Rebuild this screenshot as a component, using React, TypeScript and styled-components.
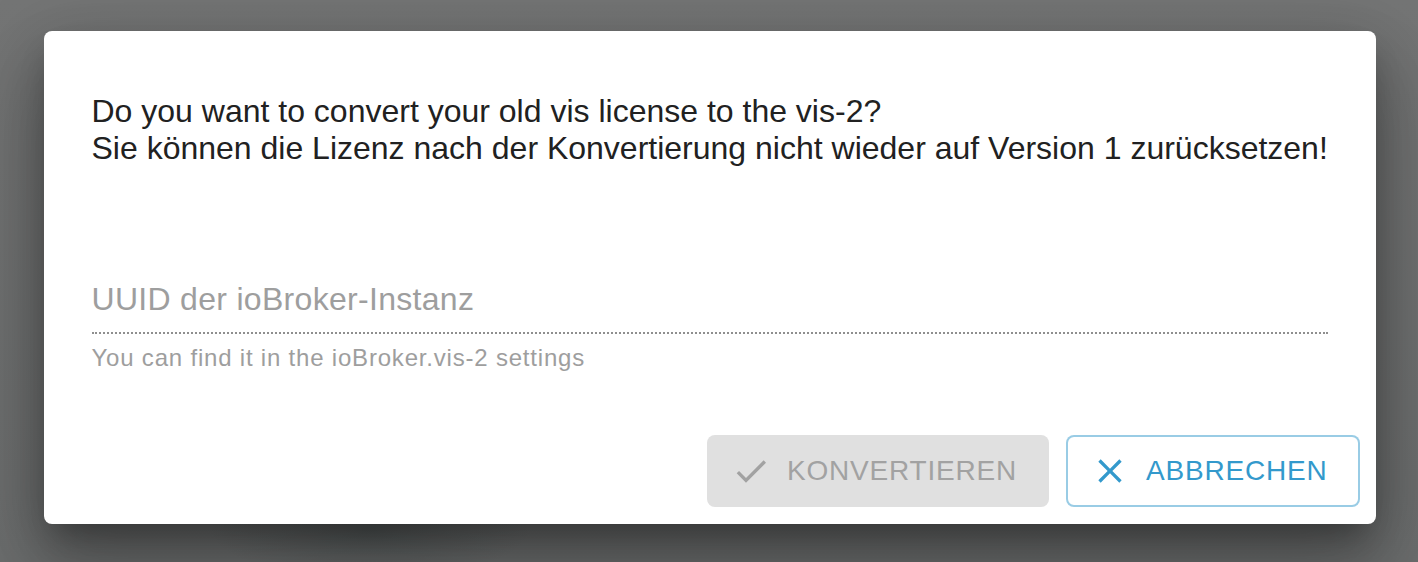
import React from 'react';
import styled, { createGlobalStyle } from 'styled-components';

const GlobalStyle = createGlobalStyle`
  html, body {
    margin: 0;
    padding: 0;
    height: 100%;
  }
  body {
    font-family: 'Liberation Sans', Arial, Helvetica, sans-serif;
    background: #757676;
    overflow: hidden;
  }
`;

const Backdrop = styled.div`
  width: 100vw;
  height: 100vh;
  box-sizing: border-box;
  padding: 31px 0 0 1px;
  display: flex;
  justify-content: center;
  align-items: flex-start;
  background:
    radial-gradient(ellipse 160px 50px at 370px 530px, rgba(40, 50, 50, 0.3), transparent),
    linear-gradient(180deg, #747575 0%, #6c6e6e 100%);
`;

const Dialog = styled.div`
  width: 1332px;
  box-sizing: border-box;
  background: #fff;
  border-radius: 8px;
  display: flex;
  flex-direction: column;
  box-shadow:
    0 22px 70px 8px rgba(0, 0, 0, 0.22),
    0 48px 76px 6px rgba(0, 0, 0, 0.16),
    0 18px 30px -10px rgba(0, 0, 0, 0.3);
`;

const Content = styled.div`
  padding: 62px 48px 0;
  display: flex;
  flex-direction: column;
`;

const Message = styled.p`
  margin: 0;
  font-size: 32px;
  line-height: 37px;
  color: #212121;
  white-space: nowrap;
`;

const Field = styled.div`
  margin-top: 114px;
  display: flex;
  flex-direction: column;
`;

const InputBox = styled.div`
  padding-bottom: 14px;
  border-bottom: 2px dotted #8f8f8f;
`;

const Label = styled.span`
  display: block;
  font-size: 32px;
  line-height: 37px;
  color: #9e9e9e;
  letter-spacing: 0.3px;
`;

const HelperText = styled.p`
  margin: 4px 0 0;
  font-size: 24px;
  line-height: 40px;
  letter-spacing: 0.8px;
  color: #9e9e9e;
`;

const Actions = styled.div`
  display: flex;
  justify-content: flex-end;
  gap: 17px;
  padding: 57px 16px 17px;
`;

const Button = styled.button<{ $variant: 'disabled' | 'outlined' }>`
  height: 72px;
  box-sizing: border-box;
  display: inline-flex;
  align-items: center;
  padding: 0 30px 0 22px;
  border-radius: 8px;
  font-family: inherit;
  font-size: 28px;
  letter-spacing: 0.8px;
  text-transform: uppercase;
  cursor: ${({ $variant }) => ($variant === 'disabled' ? 'default' : 'pointer')};
  background: ${({ $variant }) => ($variant === 'disabled' ? '#e0e0e0' : '#fff')};
  color: ${({ $variant }) => ($variant === 'disabled' ? '#a2a2a2' : '#3399cc')};
  border: ${({ $variant }) =>
    $variant === 'disabled' ? '2px solid transparent' : '2px solid rgba(51, 153, 204, 0.5)'};
`;

const Icon = styled.svg`
  width: 40px;
  height: 40px;
  margin-right: 16px;
  fill: currentColor;
  flex-shrink: 0;
`;

const CheckIcon = () => (
  <Icon viewBox="0 0 24 24">
    <path d="M9 16.17 4.83 12l-1.42 1.41L9 19 21 7l-1.41-1.41z" />
  </Icon>
);

const CloseIcon = () => (
  <Icon viewBox="0 0 24 24">
    <path d="M19 6.41 17.59 5 12 10.59 6.41 5 5 6.41 10.59 12 5 17.59 6.41 19 12 13.41 17.59 19 19 17.59 13.41 12z" />
  </Icon>
);

const App: React.FC = () => {
  return (
    <>
      <GlobalStyle />
      <Backdrop>
        <Dialog>
          <Content>
            <Message>
              Do you want to convert your old vis license to the vis-2?
              <br />
              Sie können die Lizenz nach der Konvertierung nicht wieder auf Version 1 zurücksetzen!
            </Message>
            <Field>
              <InputBox>
                <Label>UUID der ioBroker-Instanz</Label>
              </InputBox>
              <HelperText>You can find it in the ioBroker.vis-2 settings</HelperText>
            </Field>
          </Content>
          <Actions>
            <Button $variant="disabled" disabled>
              <CheckIcon />
              Konvertieren
            </Button>
            <Button $variant="outlined">
              <CloseIcon />
              Abbrechen
            </Button>
          </Actions>
        </Dialog>
      </Backdrop>
    </>
  );
};

export default App;
